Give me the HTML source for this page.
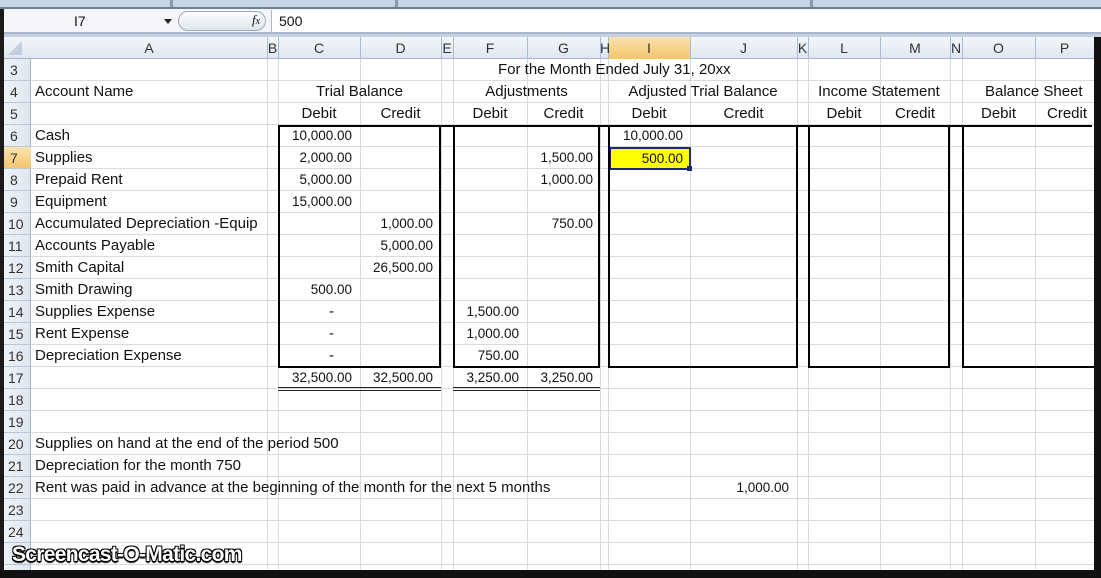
<!DOCTYPE html>
<html><head><meta charset="utf-8"><style>
*{margin:0;padding:0;box-sizing:border-box}
body{width:1101px;height:578px;overflow:hidden;background:#fff;position:relative;font-family:"Liberation Sans",sans-serif;font-size:15px;color:#111}
.a{position:absolute}
.t{position:absolute;height:22px;line-height:22px;white-space:nowrap}
.r{text-align:right;font-size:13.5px}.ce{text-align:center}
.v{position:absolute;top:37px;width:1px;height:533px;background:#d8dadd}
.hv{position:absolute;top:37px;width:1px;height:22px;background:#a9bdd4}
.k{position:absolute;background:#000}
.ch{position:absolute;top:37px;height:22px;line-height:22px;text-align:center;color:#333;font-size:14px}
.rh{position:absolute;left:4px;width:27px;height:22px;line-height:22px;padding-left:6px;color:#333;font-size:14px}
</style></head><body>
<div class="a" style="left:0;top:0;width:1101px;height:9px;background:#c9d5e3;border-bottom:2px solid #6d7f95"></div>
<div class="a" style="left:170px;top:0;width:3px;height:7px;background:#8a9ab0"></div>
<div class="a" style="left:395px;top:0;width:3px;height:7px;background:#8a9ab0"></div>
<div class="a" style="left:810px;top:0;width:3px;height:7px;background:#8a9ab0"></div>
<div class="a" style="left:0;top:9px;width:1101px;height:25px;background:#f4f6f9;border-bottom:2px solid #a7b8cc"></div>
<div class="t" style="left:74px;top:10px;font-size:14px">I7</div>
<div class="a" style="left:164px;top:19px;border-left:4px solid transparent;border-right:4px solid transparent;border-top:5px solid #222"></div>
<div class="a" style="left:178px;top:11px;width:88px;height:20px;border-radius:10px;background:linear-gradient(#fff,#dde4ec);border:1px solid #9aa9bb"></div>
<div class="t" style="left:252px;top:9px;font-family:'Liberation Serif',serif;font-style:italic;font-size:13px">f<span style="font-size:10px">x</span></div>
<div class="a" style="left:271px;top:10px;width:1px;height:22px;background:#a7b8cc"></div>
<div class="a" style="left:272px;top:10px;width:829px;height:22px;background:#fff"></div>
<div class="t" style="left:279px;top:10px;font-size:14px">500</div>
<div class="a" style="left:0;top:34px;width:1101px;height:3px;background:#c5d1de"></div>
<div class="a" style="left:4px;top:37px;width:1090px;height:22px;background:linear-gradient(#f4f7fb,#dfe6ef);border-bottom:1px solid #9eb6ce"></div>
<div class="a" style="left:4px;top:59px;width:27px;height:511px;background:linear-gradient(90deg,#eef2f7,#dfe6ef);border-right:1px solid #9eb6ce"></div>
<div class="a" style="left:608px;top:37px;width:82px;height:22px;background:linear-gradient(#fbe2b0,#f3c56a)"></div>
<div class="a" style="left:4px;top:147px;width:27px;height:22px;background:linear-gradient(#fbe2b0,#f3c56a)"></div>
<div class="a" style="left:8px;top:41px;width:0;height:0;border-left:14px solid transparent;border-bottom:14px solid #c3cfdd"></div>
<div class="a" style="left:31px;top:59px;width:1063px;height:511px;background:repeating-linear-gradient(to bottom,transparent 0 21px,#d8dadd 21px 22px)"></div>
<div class="a" style="left:4px;top:59px;width:27px;height:511px;background:repeating-linear-gradient(to bottom,transparent 0 21px,#b9c8d9 21px 22px)"></div>
<div class="v" style="left:267px"></div><div class="v" style="left:278px"></div><div class="v" style="left:360px"></div><div class="v" style="left:441px"></div><div class="v" style="left:453px"></div><div class="v" style="left:527px"></div><div class="v" style="left:600px"></div><div class="v" style="left:608px"></div><div class="v" style="left:690px"></div><div class="v" style="left:797px"></div><div class="v" style="left:808px"></div><div class="v" style="left:880px"></div><div class="v" style="left:950px"></div><div class="v" style="left:962px"></div><div class="v" style="left:1035px"></div>
<div class="hv" style="left:267px"></div><div class="hv" style="left:278px"></div><div class="hv" style="left:360px"></div><div class="hv" style="left:441px"></div><div class="hv" style="left:453px"></div><div class="hv" style="left:527px"></div><div class="hv" style="left:600px"></div><div class="hv" style="left:608px"></div><div class="hv" style="left:690px"></div><div class="hv" style="left:797px"></div><div class="hv" style="left:808px"></div><div class="hv" style="left:880px"></div><div class="hv" style="left:950px"></div><div class="hv" style="left:962px"></div><div class="hv" style="left:1035px"></div>
<div class="ch" style="left:31px;width:236px">A</div>
<div class="ch" style="left:267px;width:11px">B</div>
<div class="ch" style="left:278px;width:82px">C</div>
<div class="ch" style="left:360px;width:81px">D</div>
<div class="ch" style="left:441px;width:12px">E</div>
<div class="ch" style="left:453px;width:74px">F</div>
<div class="ch" style="left:527px;width:73px">G</div>
<div class="ch" style="left:600px;width:8px">H</div>
<div class="ch" style="left:608px;width:82px">I</div>
<div class="ch" style="left:690px;width:107px">J</div>
<div class="ch" style="left:797px;width:11px">K</div>
<div class="ch" style="left:808px;width:72px">L</div>
<div class="ch" style="left:880px;width:70px">M</div>
<div class="ch" style="left:950px;width:12px">N</div>
<div class="ch" style="left:962px;width:73px">O</div>
<div class="ch" style="left:1035px;width:59px">P</div>
<div class="rh" style="top:59px">3</div><div class="rh" style="top:81px">4</div><div class="rh" style="top:103px">5</div><div class="rh" style="top:125px">6</div><div class="rh" style="top:147px">7</div><div class="rh" style="top:169px">8</div><div class="rh" style="top:191px">9</div><div class="rh" style="top:213px;padding-left:4px">10</div><div class="rh" style="top:235px;padding-left:4px">11</div><div class="rh" style="top:257px;padding-left:4px">12</div><div class="rh" style="top:279px;padding-left:4px">13</div><div class="rh" style="top:301px;padding-left:4px">14</div><div class="rh" style="top:323px;padding-left:4px">15</div><div class="rh" style="top:345px;padding-left:4px">16</div><div class="rh" style="top:367px;padding-left:4px">17</div><div class="rh" style="top:389px;padding-left:4px">18</div><div class="rh" style="top:411px;padding-left:4px">19</div><div class="rh" style="top:433px;padding-left:4px">20</div><div class="rh" style="top:455px;padding-left:4px">21</div><div class="rh" style="top:477px;padding-left:4px">22</div><div class="rh" style="top:499px;padding-left:4px">23</div><div class="rh" style="top:521px;padding-left:4px">24</div>
<div class="a" style="left:609px;top:147px;width:82px;height:23px;background:#ffff00;border:2px solid #1f2a6b"></div>
<div class="a" style="left:687px;top:166px;width:5px;height:5px;background:#1f2a6b"></div>
<div class="k" style="left:278px;top:125px;width:814px;height:2px"></div>
<div class="k" style="left:278px;top:125px;width:2px;height:243px"></div>
<div class="k" style="left:439px;top:125px;width:2px;height:243px"></div>
<div class="k" style="left:278px;top:366px;width:163px;height:2px"></div>
<div class="k" style="left:453px;top:125px;width:2px;height:243px"></div>
<div class="k" style="left:598px;top:125px;width:2px;height:243px"></div>
<div class="k" style="left:453px;top:366px;width:147px;height:2px"></div>
<div class="k" style="left:608px;top:125px;width:2px;height:243px"></div>
<div class="k" style="left:796px;top:125px;width:2px;height:243px"></div>
<div class="k" style="left:608px;top:366px;width:190px;height:2px"></div>
<div class="k" style="left:808px;top:125px;width:2px;height:243px"></div>
<div class="k" style="left:948px;top:125px;width:2px;height:243px"></div>
<div class="k" style="left:808px;top:366px;width:142px;height:2px"></div>
<div class="k" style="left:962px;top:125px;width:2px;height:243px"></div>
<div class="k" style="left:962px;top:366px;width:132px;height:2px"></div>
<div class="a" style="left:278px;top:387px;width:163px;height:4px;border-top:1px solid #222;border-bottom:1px solid #222"></div>
<div class="a" style="left:453px;top:387px;width:147px;height:4px;border-top:1px solid #222;border-bottom:1px solid #222"></div>
<div class="t" style="left:498px;top:59px">For the Month Ended July  31, 20xx</div>
<div class="t" style="left:35px;top:81px">Account Name</div>
<div class="t ce" style="left:278px;width:163px;top:81px">Trial Balance</div>
<div class="t ce" style="left:453px;width:147px;top:81px">Adjustments</div>
<div class="t ce" style="left:608px;width:190px;top:81px">Adjusted Trial Balance</div>
<div class="t ce" style="left:808px;width:142px;top:81px">Income Statement</div>
<div class="t" style="left:985px;top:81px">Balance Sheet</div>
<div class="t ce" style="left:278px;width:82px;top:103px">Debit</div>
<div class="t ce" style="left:360px;width:81px;top:103px">Credit</div>
<div class="t ce" style="left:453px;width:74px;top:103px">Debit</div>
<div class="t ce" style="left:527px;width:73px;top:103px">Credit</div>
<div class="t ce" style="left:608px;width:82px;top:103px">Debit</div>
<div class="t ce" style="left:690px;width:107px;top:103px">Credit</div>
<div class="t ce" style="left:808px;width:72px;top:103px">Debit</div>
<div class="t ce" style="left:880px;width:70px;top:103px">Credit</div>
<div class="t ce" style="left:962px;width:73px;top:103px">Debit</div>
<div class="t" style="left:1047px;top:103px">Credit</div>
<div class="t" style="left:35px;top:125px">Cash</div>
<div class="t" style="left:35px;top:147px">Supplies</div>
<div class="t" style="left:35px;top:169px">Prepaid Rent</div>
<div class="t" style="left:35px;top:191px">Equipment</div>
<div class="t" style="left:35px;top:213px">Accumulated Depreciation -Equip</div>
<div class="t" style="left:35px;top:235px">Accounts Payable</div>
<div class="t" style="left:35px;top:257px">Smith Capital</div>
<div class="t" style="left:35px;top:279px">Smith Drawing</div>
<div class="t" style="left:35px;top:301px">Supplies Expense</div>
<div class="t" style="left:35px;top:323px">Rent Expense</div>
<div class="t" style="left:35px;top:345px">Depreciation Expense</div>
<div class="t" style="left:35px;top:433px">Supplies on hand at the end of the period 500</div>
<div class="t" style="left:35px;top:455px">Depreciation for the month 750</div>
<div class="t" style="left:35px;top:477px">Rent was paid in advance at the beginning of the month for the next 5 months</div>
<div class="t r" style="left:278px;width:74px;top:125px">10,000.00</div>
<div class="t r" style="left:278px;width:74px;top:147px">2,000.00</div>
<div class="t r" style="left:278px;width:74px;top:169px">5,000.00</div>
<div class="t r" style="left:278px;width:74px;top:191px">15,000.00</div>
<div class="t r" style="left:278px;width:74px;top:279px">500.00</div>
<div class="t" style="left:329px;top:301px">-</div>
<div class="t" style="left:329px;top:323px">-</div>
<div class="t" style="left:329px;top:345px">-</div>
<div class="t r" style="left:278px;width:74px;top:367px">32,500.00</div>
<div class="t r" style="left:360px;width:73px;top:213px">1,000.00</div>
<div class="t r" style="left:360px;width:73px;top:235px">5,000.00</div>
<div class="t r" style="left:360px;width:73px;top:257px">26,500.00</div>
<div class="t r" style="left:360px;width:73px;top:367px">32,500.00</div>
<div class="t r" style="left:453px;width:66px;top:301px">1,500.00</div>
<div class="t r" style="left:453px;width:66px;top:323px">1,000.00</div>
<div class="t r" style="left:453px;width:66px;top:345px">750.00</div>
<div class="t r" style="left:453px;width:66px;top:367px">3,250.00</div>
<div class="t r" style="left:527px;width:66px;top:147px">1,500.00</div>
<div class="t r" style="left:527px;width:66px;top:169px">1,000.00</div>
<div class="t r" style="left:527px;width:66px;top:213px">750.00</div>
<div class="t r" style="left:527px;width:66px;top:367px">3,250.00</div>
<div class="t r" style="left:608px;width:75px;top:125px">10,000.00</div>
<div class="t r" style="left:608px;width:75px;top:148px">500.00</div>
<div class="t r" style="left:690px;width:99px;top:477px">1,000.00</div>
<div class="t" style="left:12px;top:544px;font-weight:bold;font-size:21px;color:#fff;letter-spacing:-0.7px;text-shadow:-1px -1px 0 #000,1px -1px 0 #000,-1px 1px 0 #000,1px 1px 0 #000,0 2px 1px #000">Screencast-O-Matic.com</div>
<div class="a" style="left:0;top:9px;width:4px;height:569px;background:#1a1a1a"></div>
<div class="a" style="left:0;top:570px;width:1101px;height:8px;background:#111"></div>
<div class="a" style="left:1094px;top:37px;width:7px;height:541px;background:#111"></div>
</body></html>
